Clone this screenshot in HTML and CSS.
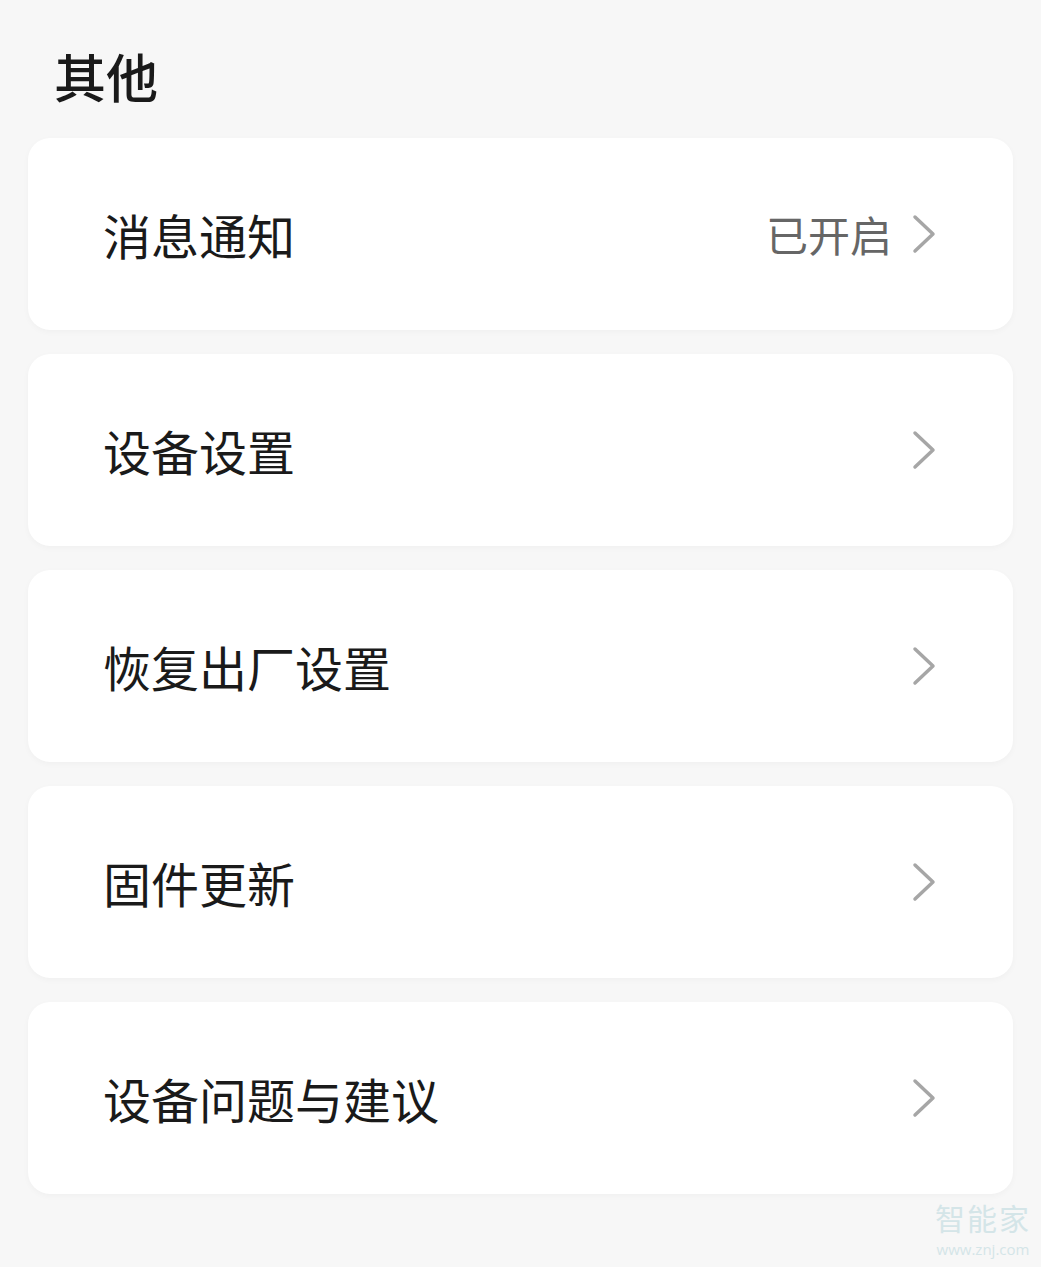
FILE: index.html
```html
<!DOCTYPE html>
<html lang="zh-CN">
<head>
  <meta charset="UTF-8" />
  <meta name="viewport" content="width=device-width, initial-scale=1.0" />
  <title>其他</title>
  <link rel="stylesheet" href="styles.css">
</head>
<body>
  <div class="page">
    <h1 class="title">其他</h1>
    <div class="list">
      <div class="item">
        <span class="label">消息通知</span>
        <span class="right">
          <span class="value">已开启</span>
          <svg class="chevron" viewBox="0 0 24 40"><path d="M3 3 L21 20 L3 37" /></svg>
        </span>
      </div>
      <div class="item">
        <span class="label">设备设置</span>
        <span class="right">
          <svg class="chevron" viewBox="0 0 24 40"><path d="M3 3 L21 20 L3 37" /></svg>
        </span>
      </div>
      <div class="item">
        <span class="label">恢复出厂设置</span>
        <span class="right">
          <svg class="chevron" viewBox="0 0 24 40"><path d="M3 3 L21 20 L3 37" /></svg>
        </span>
      </div>
      <div class="item">
        <span class="label">固件更新</span>
        <span class="right">
          <svg class="chevron" viewBox="0 0 24 40"><path d="M3 3 L21 20 L3 37" /></svg>
        </span>
      </div>
      <div class="item">
        <span class="label">设备问题与建议</span>
        <span class="right">
          <svg class="chevron" viewBox="0 0 24 40"><path d="M3 3 L21 20 L3 37" /></svg>
        </span>
      </div>
    </div>
  </div>
  <div class="watermark">
    <div class="wm-name">智能家</div>
    <div class="wm-url">www.znj.com</div>
  </div>
</body>
</html>
```

FILE: styles.css
```css
body {
  margin: 0;
  background: #f7f7f7;
  font-family: "Noto Sans CJK SC", "Noto Sans", sans-serif;
  color: #1a1a1a;
  height: 1267px;
  overflow: hidden;
  position: relative;
}
.page {
  padding: 0 28px;
}
.title {
  margin: 0;
  padding: 50px 0 0 26px;
  height: 52px;
  font-size: 52px;
  line-height: 52px;
  font-weight: 500;
  color: #1a1a1a;
}
.list {
  margin-top: 36px;
  display: flex;
  flex-direction: column;
  gap: 24px;
}
.item {
  height: 192px;
  background: #fff;
  border-radius: 22px;
  box-shadow: 0 2px 6px rgba(0, 0, 0, 0.03);
  display: flex;
  align-items: center;
  justify-content: space-between;
  padding: 0 77px 0 75px;
}
.label {
  font-size: 48px;
  line-height: 1;
  color: #1a1a1a;
}
.right {
  display: flex;
  align-items: center;
  gap: 20px;
}
.value {
  font-size: 42px;
  line-height: 1;
  color: #666;
}
.chevron {
  width: 24px;
  height: 40px;
  fill: none;
  stroke: #a6a6a6;
  stroke-width: 3.5;
  stroke-linecap: round;
  stroke-linejoin: round;
}
.watermark {
  position: absolute;
  right: 10px;
  bottom: 8px;
  text-align: center;
  color: #d4e5e8;
}
.wm-name {
  font-size: 30px;
  line-height: 44px;
  letter-spacing: 2px;
}
.wm-url {
  font-family: "Open Sans", sans-serif;
  font-size: 15px;
  line-height: 20px;
}
```
